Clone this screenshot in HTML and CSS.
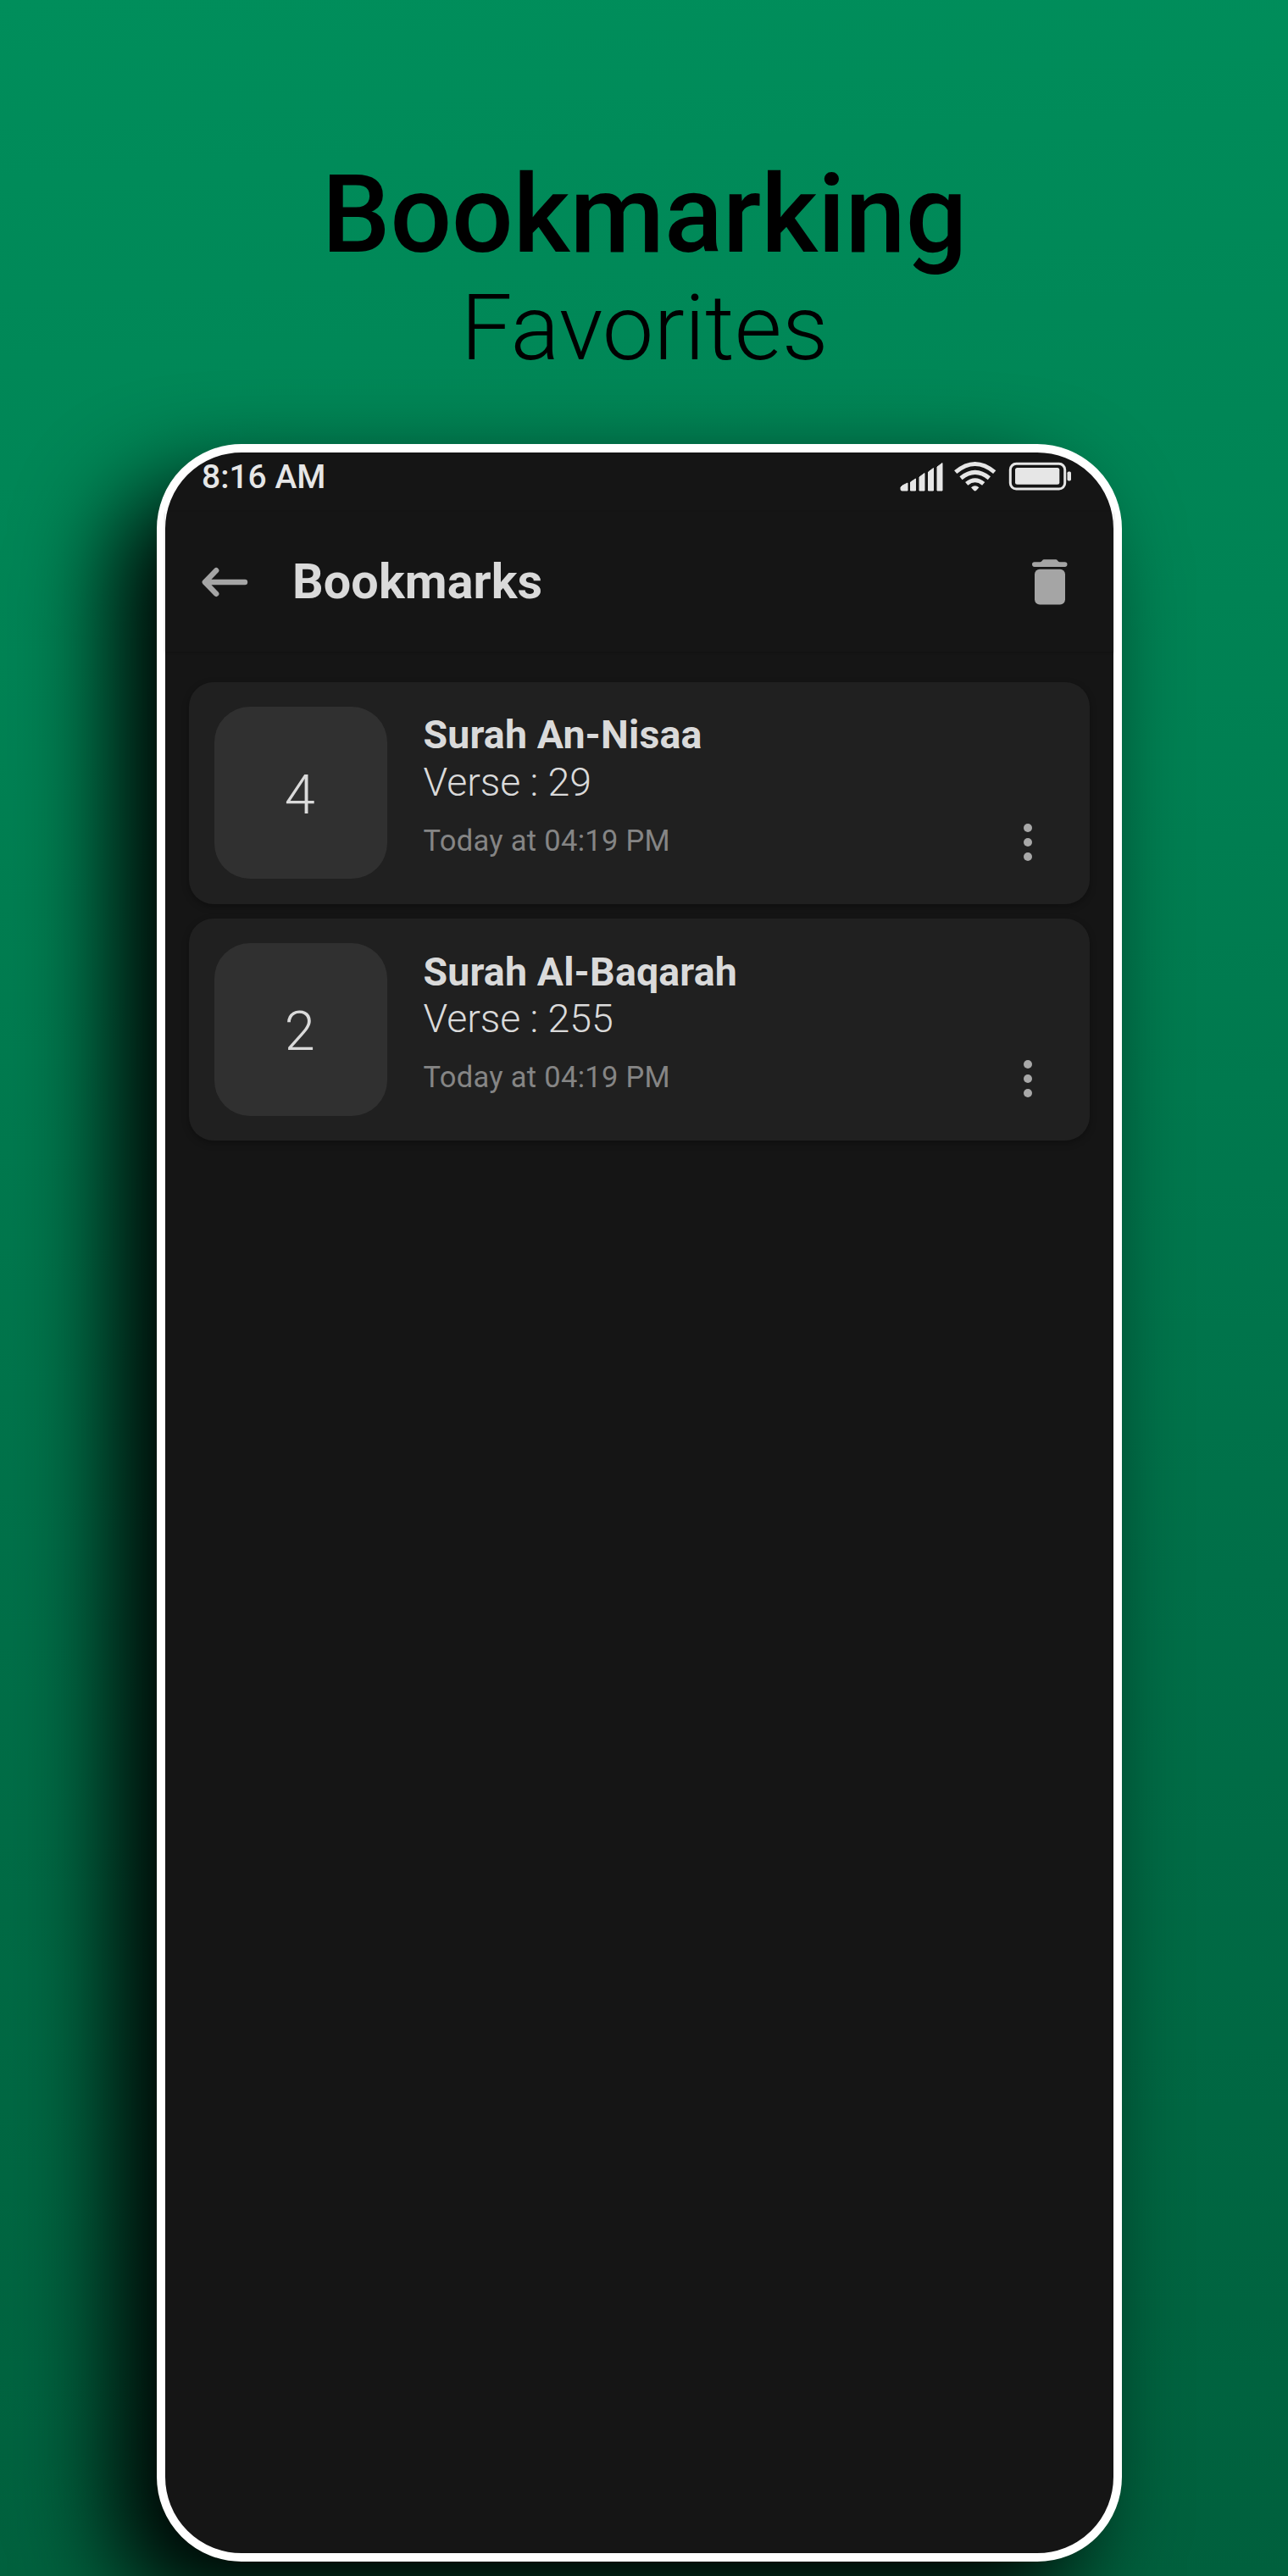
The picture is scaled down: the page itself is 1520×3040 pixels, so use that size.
FILE: index.html
```html
<!DOCTYPE html>
<html lang="en">
<head>
<meta charset="utf-8">
<title>Bookmarking</title>
<link rel="stylesheet" href="styles.css">
</head>
<body>
<main class="poster">
  <h1 class="headline">Bookmarking</h1>
  <p class="subhead">Favorites</p>
  <section class="phone">
    <div class="status">
      <span class="time">8:16 AM</span>
      <svg class="status-icons" width="204" height="40" viewBox="0 0 204 40" fill="#e6e6e6">
        <path d="M1 31l2-2 6-3v9H2.5Q1 35 1 33.500z M12.500 25l6-4v14h-6z M23 19l6-4.500V35h-6z M33.500 13l6-4.500V35h-6z M44 7l6-4.500V35h-6z" stroke="#e6e6e6" stroke-width="1" stroke-linejoin="round"/>
        <g fill="none" stroke="#e6e6e6" stroke-width="5">
          <path d="M65.700 13.200Q88.700-6.200 111.700 13.200"/>
          <path d="M72 20.200Q88.700 6.400 105.400 20.200"/>
          <path d="M78.700 26.900Q88.700 18.600 98.700 26.900"/>
        </g>
        <path d="M84 31.200Q88.700 27.200 93.400 31.200L90.200 34.800Q88.700 36.200 87.200 34.800z"/>
        <rect x="130.300" y="3.300" width="64.400" height="29.700" rx="7" fill="none" stroke="#e6e6e6" stroke-width="3"/>
        <rect x="136" y="8" width="52.300" height="19.700" rx="2.500"/>
        <rect x="197.500" y="12.500" width="4.500" height="11" rx="1.700"/>
      </svg>
    </div>
    <header class="toolbar">
      <svg class="back" width="56" height="38" viewBox="0 0 56 38" fill="none" stroke="#a5a5a5" stroke-width="6.400" stroke-linecap="round" stroke-linejoin="round"><path d="M51 19H4M17.200 5.200L3.800 19l13.400 13.800"/></svg>
      <h2 class="title">Bookmarks</h2>
      <svg class="trash" width="42" height="54" viewBox="0 0 42 54" fill="#a5a5a5">
        <path d="M2.800 3.300H9.500Q11 3.300 12 1.500 12.800.3 14 .3H28Q29.200.3 30 1.500 31 3.300 32.500 3.300H38.700A2.800 2.800 0 0 1 38.700 8.900H2.800A2.800 2.800 0 0 1 2.800 3.300z"/>
        <rect x="3" y="11.800" width="36" height="41.700" rx="6"/>
      </svg>
    </header>
    <div class="list">
      <article class="card">
        <div class="number">4</div>
        <div class="info">
          <h3 class="name">Surah An-Nisaa</h3>
          <p class="verse">Verse : 29</p>
          <p class="date">Today at 04:19 PM</p>
        </div>
        <svg class="more" width="12" height="46" viewBox="0 0 12 46" fill="#a8a8a8"><circle cx="6" cy="6" r="5"/><circle cx="6" cy="23" r="5"/><circle cx="6" cy="40" r="5"/></svg>
      </article>
      <article class="card">
        <div class="number">2</div>
        <div class="info">
          <h3 class="name">Surah Al-Baqarah</h3>
          <p class="verse">Verse : 255</p>
          <p class="date">Today at 04:19 PM</p>
        </div>
        <svg class="more" width="12" height="46" viewBox="0 0 12 46" fill="#a8a8a8"><circle cx="6" cy="6" r="5"/><circle cx="6" cy="23" r="5"/><circle cx="6" cy="40" r="5"/></svg>
      </article>
    </div>
  </section>
</main>
</body>
</html>
```
FILE: styles.css
```css
* { box-sizing: border-box; margin: 0; padding: 0; }
body { font-family: Roboto, sans-serif; }
svg { display: block; flex: none; }
.poster {
  width: 1520px;
  height: 3040px;
  overflow: hidden;
  padding-top: 180px;
  background: linear-gradient(177deg, #008e5b 0%, #008354 25%, #006f48 62%, #00603d 100%);
  color: #000;
  text-align: center;
}
.headline { padding-left: 1px; font-size: 128px; line-height: 146px; font-weight: 500; }
.subhead { padding-left: 1px; font-size: 108px; line-height: 122px; font-weight: 300; }
.phone {
  width: 1139px;
  height: 2499px;
  margin: 76px 0 0 185px;
  border: 10px solid #fff;
  border-radius: 100px;
  background: #151515;
  box-shadow: -50px 50px 115px #000;
  text-align: left;
}
.status {
  display: flex;
  justify-content: space-between;
  height: 70px;
  padding: 6px 48px 0 43px;
}
.time { font-size: 39px; line-height: 46px; font-weight: 500; color: #e6e6e6; }
.status-icons { margin-top: 4px; }
.toolbar {
  display: flex;
  align-items: center;
  height: 165px;
  padding: 0 54px 0 42.500px;
  box-shadow: 0 1px 3px rgba(0, 0, 0, 0.2);
}
.title {
  flex: 1;
  margin-left: 51.500px;
  font-size: 57.500px;
  line-height: 68px;
  font-weight: 700;
  letter-spacing: 0.1px;
  color: #dadada;
}
.list { display: flex; flex-direction: column; gap: 17.500px; padding: 35.500px 28px 0; }
.card {
  display: flex;
  height: 262px;
  padding: 29px 67px 29px 29.500px;
  border-radius: 29px;
  background: #202020;
  box-shadow: 0 3px 8px rgba(0, 0, 0, 0.3);
}
.number {
  width: 204px;
  height: 203.500px;
  border-radius: 42px;
  background: #303030;
  color: #dadada;
  font-size: 65px;
  line-height: 209px;
  font-weight: 300;
  text-align: center;
  text-indent: -1.500px;
}
.info { flex: 1; margin-left: 43px; padding-top: 6.500px; color: #dadada; }
.name {
  font-size: 46.500px;
  line-height: 55.500px;
  font-weight: 700;
  letter-spacing: 0.14px;
  white-space: nowrap;
}
.verse { font-size: 46.500px; line-height: 54.500px; font-weight: 300; letter-spacing: -0.05px; }
.date {
  margin-top: 21.500px;
  font-size: 34.500px;
  line-height: 40px;
  font-weight: 400;
  letter-spacing: 0.3px;
  color: #858585;
}
.more { margin-top: 137px; }
```
